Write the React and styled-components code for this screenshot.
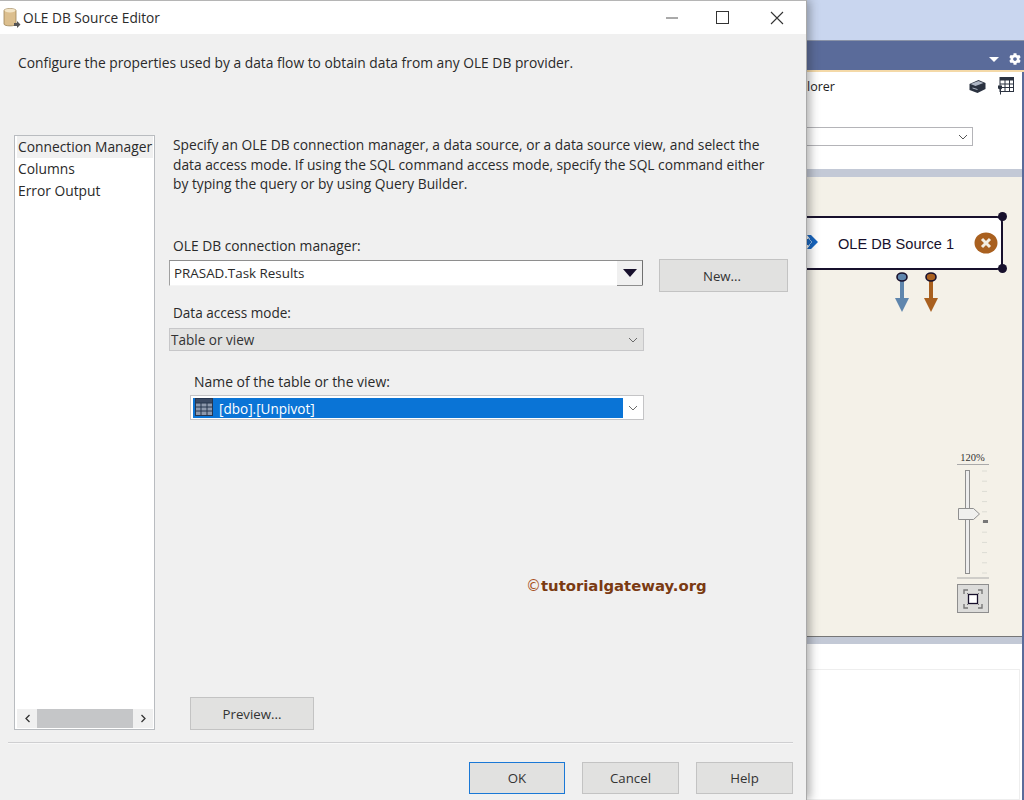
import React from "react";
import styled, { createGlobalStyle } from "styled-components";
import { FaCog } from "react-icons/fa";

const Global = createGlobalStyle`
  html, body { margin: 0; padding: 0; width: 1024px; height: 800px; overflow: hidden; background: #fff; }
  #root { width: 1024px; height: 800px; }
  * { box-sizing: border-box; }
`;
const Page = styled.div`
  display: flex; width: 1024px; height: 800px; overflow: hidden;
  font-family: "Open Sans", "Noto Sans", "Liberation Sans", sans-serif; color: #222;
`;
const Dialog = styled.div`
  width: 807px; flex: none; height: 800px; background: #f0f0f0; display: flex; flex-direction: column;
  border-top: 1px solid #b5b5b5; border-right: 1px solid #a9a9a9;
  box-shadow: 3px 0 9px rgba(40,40,40,.38); position: relative; z-index: 2;
`;
const TitleBar = styled.div`
  height: 33px; flex: none; background: #fff; display: flex; align-items: center; padding-left: 2px;
`;
const TitleText = styled.span` font-size: 13.7px; margin-left: 1px; color: #2a2a2a; flex: 1; `;
const WinButton = styled.span` width: ${p => p.$w || 54}px; display: flex; justify-content: center; margin-right: ${p => p.$mr || 0}px; `;
const Body = styled.div` flex: 1; display: flex; flex-direction: column; `;
const Description = styled.div`
  margin: 19px 0 62px 18px; font-size: 13.8px; line-height: 20px; height: 20px; color: #2a2a2a; white-space: nowrap;
`;
const Content = styled.div` display: flex; height: 595px; margin-left: 14px; `;
const SideList = styled.div`
  width: 141px; flex: none; background: #fff; border: 1px solid #b9bcc0; display: flex; flex-direction: column; padding: 0 1px 1px 2px;
`;
const SideItem = styled.div`
  font-size: 13.8px; line-height: 22px; height: 22px; padding-left: 1px; white-space: nowrap; overflow: hidden;
  background: ${p => (p.$active ? "#f0f0f0" : "transparent")}; color: #2a2a2a;
`;
const SideSpacer = styled.div` flex: 1; `;
const HScroll = styled.div` height: 19px; background: #f0f0f0; display: flex; align-items: center; `;
const ScrollArrow = styled.span` width: 20px; display: flex; justify-content: center; `;
const ScrollThumb = styled.div` width: 96px; height: 19px; background: #c5c6c8; `;
const ScrollTrack = styled.div` flex: 1; `;
const Main = styled.div` margin-left: 14px; width: 624px; display: flex; flex-direction: column; `;
const Paragraph = styled.p`
  margin: 0 0 0 4px; font-size: 13.77px; line-height: 19.5px; color: #2a2a2a; width: 606px; height: 58.5px;
`;
const Label = styled.label`
  display: block; height: 20px; line-height: 20px; font-size: ${p => p.$size}px; color: #2a2a2a;
  margin: ${p => p.$mt}px 0 0 ${p => p.$ml}px; white-space: nowrap;
`;
const ConnRow = styled.div` display: flex; margin-top: 3px; `;
const ConnCombo = styled.div`
  margin-top: 1px; width: 474px; height: 26px; background: #fff; display: flex; font-size: 13.4px;
  border-top: 1px solid #8e8e8e; border-left: 1px solid #a0a0a0; border-right: 1px solid #707070; border-bottom: 1px solid #f5f5f5;
`;
const ComboText = styled.span` flex: 1; padding-left: 4px; line-height: 25px; color: #2a2a2a; `;
const ConnArrow = styled.span`
  width: 25px; background: #f0f0f0; display: flex; align-items: center; justify-content: center;
  border-bottom: 1px solid #8e8e8e; margin-bottom: -1px;
`;
const Btn = styled.div`
  width: ${p => p.$w}px; height: ${p => p.$h}px; flex: none; background: #e1e1e0; border: 1px solid ${p => (p.$primary ? "#1a78d6" : "#c3c3c3")};
  display: flex; align-items: center; justify-content: center; font-size: 13.25px; color: #333;
`;
const NewBtn = styled(Btn)` margin-left: 16px; padding-right: 3px; `;
const ModeCombo = styled.div`
  margin-top: 5px; width: 475px; height: 24px; background: #e2e2e1; border: 1px solid #c7c7c9;
  display: flex; align-items: center; justify-content: space-between; padding: 0 5px 0 1px; font-size: 13.55px; color: #333;
`;
const TableCombo = styled.div`
  margin: 3px 0 0 21px; width: 454px; height: 25px; background: #fff; border: 1px solid #c4c4c6; padding: 2px 0 1px 2px;
  display: flex; align-items: stretch;
`;
const Selected = styled.div`
  width: 430px; background: #0a74d6; color: #fff; font-size: 13.55px; display: flex; align-items: center; gap: 6px; padding-left: 2px;
`;
const SelectedText = styled.span` padding-top: 1px; `;
const IconLift = styled.span` display: flex; margin-top: -3px; `;
const Chevron = styled.span` flex: 1; display: flex; align-items: center; justify-content: center; `;
const Watermark = styled.div`
  margin: 156px 0 0 357px; height: 20px; line-height: 20px; white-space: nowrap;
  font-family: "DejaVu Sans", Verdana, sans-serif; font-weight: 700; font-size: 14.85px; color: #7a3a12;
`;
const Copy = styled.span` color: #a8531f; font-weight: 400; font-size: 15px; `;
const PreviewBtn = styled(Btn)` margin: 101px 0 0 21px; `;
const Separator = styled.div` height: 2px; margin: 12px 13px 0 8px; background: #cfcfd1; border-bottom: 1px solid #f8f8f8; `;
const Footer = styled.div` display: flex; margin: 18px 0 0 469px; gap: 17px; `;

const Back = styled.div` flex: 1; display: flex; flex-direction: column; min-width: 0; border-right: 2px solid #5a6b9a; position: relative; `;
const TopBand = styled.div` height: 41px; flex: none; background: #c9d6ef; border-bottom: 1px solid #8a93a8; margin-right: -2px; `;
const Header = styled.div`
  height: 31px; flex: none; background: #5a6b9a; display: flex; align-items: flex-end; justify-content: flex-end;
  gap: 10px; padding: 0 3px 5px 0; border-bottom: 2px solid #f4d9a8; margin-right: -2px;
`;
const Caret = styled.span`
  width: 0; height: 0; border-left: 5px solid transparent; border-right: 5px solid transparent; border-top: 5px solid #fff; margin-bottom: 3px;
`;
const Toolbar = styled.div` height: 97px; flex: none; background: #fff; display: flex; flex-direction: column; `;
const ToolTop = styled.div` display: flex; align-items: center; height: 28px; padding: 0 8px 0 0; `;
const ToolText = styled.span` font-size: 12.5px; color: #222; flex: 1; `;
const ToolIcons = styled.span` display: flex; gap: 10px; align-items: center; `;
const ToolCombo = styled.div`
  margin-top: 27px; width: 166px; height: 19px; border: 1px solid #b4b4b8; border-left: 0; background: #fff; display: flex; align-items: center; justify-content: flex-end; padding-right: 4px;
`;
const Strip = styled.div` height: ${p => p.$h}px; flex: none; background: #c3c9d6; border-top: ${p => (p.$line ? "1px solid #777" : "0")}; `;
const Canvas = styled.div` height: 459px; flex: none; background: #f4f1e8; position: relative; `;
const Node = styled.div`
  position: absolute; left: -4px; top: 39px; width: 200px; height: 54px; background: #fff; border: 2.5px solid #17102c; border-radius: 0 6px 6px 0;
  display: flex; align-items: center; font-family: "Liberation Sans", Arial, sans-serif; font-size: 14.6px; color: #17102c;
`;
const NodeText = styled.span` margin-left: 33px; flex: 1; padding-top: 1px; `;
const Handle = styled.span`
  position: absolute; right: -6px; width: 9px; height: 9px; border-radius: 50%; background: #17102c; top: ${p => p.$top}px;
`;
const Port = styled.svg` position: absolute; top: 94px; left: ${p => p.$left}px; `;
const InArrow = styled.svg` position: absolute; left: -1px; top: 57px; `;
const NodeX = styled.svg` flex: none; margin-right: 3px; `;
const Zoom = styled.div`
  position: absolute; left: 149px; top: 274px; width: 33px; display: flex; flex-direction: column; align-items: center;
`;
const ZoomLabel = styled.div`
  width: 32px; height: 14px; font-family: "Liberation Serif", serif; font-size: 10.5px; line-height: 14px; text-align: center; color: #333; border-bottom: 1px solid #aaa;
`;
const ZoomScale = styled.svg` display: block; margin-bottom: 5px; `;
const ZoomFit = styled.div`
  width: 32px; height: 29px; background: #dcdcda; border: 1px solid #8e8e8e; display: flex; align-items: center; justify-content: center;
`;
const Bottom = styled.div` flex: 1; background: #fff; padding: 25px 2px 0 0; `;
const BottomInner = styled.div` height: 100%; border: 1px solid #eee; border-left: 0; `;

const Chev = ({ color = "#6b6b6b" }) => (
  <svg width="10" height="6" viewBox="0 0 10 6"><path d="M1 1l4 4 4-4" fill="none" stroke={color} strokeWidth="1" /></svg>
);
const GridIcon = () => (
  <svg width="18" height="18" viewBox="0 0 18 18">
    <rect x=".5" y=".5" width="17" height="17" fill="#8d99ad" stroke="#26364f" />
    <rect x="1" y="1" width="16" height="4" fill="#3b4a63" />
    {[5, 9, 13].map(y => <line key={y} x1="1" x2="17" y1={y} y2={y} stroke="#26364f" />)}
    {[6, 12].map(x => <line key={x} y1="5" y2="17" x1={x} x2={x} stroke="#26364f" />)}
  </svg>
);

export default function App() {
  return (
    <Page>
      <Global />
      <Dialog>
        <TitleBar>
          <svg width="20" height="22" viewBox="0 0 20 22">
            <path d="M2 3.5C2 1 14 1 14 3.5V17C14 19.5 2 19.5 2 17Z" fill="#dcbf8e" stroke="#9c8457" strokeWidth=".8" />
            <ellipse cx="8" cy="3.6" rx="5.4" ry="1.8" fill="#f3e5c7" />
            <path d="M12 16h3v-2l3.5 3.5L15 21v-2h-3z" fill="#555" />
          </svg>
          <TitleText>OLE DB Source Editor</TitleText>
          <WinButton $w={46}>
            <svg width="12" height="2" viewBox="0 0 12 2"><line x1="0" x2="12" y1="1" y2="1" stroke="#555" strokeWidth="1" /></svg>
          </WinButton>
          <WinButton $mr={1}>
            <svg width="13" height="13" viewBox="0 0 13 13"><rect x=".5" y=".5" width="12" height="12" fill="none" stroke="#333" /></svg>
          </WinButton>
          <WinButton $mr={2}>
            <svg width="14" height="14" viewBox="0 0 14 14"><path d="M1 1l12 12M13 1L1 13" stroke="#333" strokeWidth="1.1" /></svg>
          </WinButton>
        </TitleBar>
        <Body>
          <Description>Configure the properties used by a data flow to obtain data from any OLE DB provider.</Description>
          <Content>
            <SideList>
              <SideItem $active>Connection Manager</SideItem>
              <SideItem>Columns</SideItem>
              <SideItem>Error Output</SideItem>
              <SideSpacer />
              <HScroll>
                <ScrollArrow>
                  <svg width="7" height="9" viewBox="0 0 7 9"><path d="M5.5 1L2 4.5 5.5 8" fill="none" stroke="#333" strokeWidth="1.3" /></svg>
                </ScrollArrow>
                <ScrollThumb />
                <ScrollTrack />
                <ScrollArrow>
                  <svg width="7" height="9" viewBox="0 0 7 9"><path d="M1.5 1L5 4.5 1.5 8" fill="none" stroke="#333" strokeWidth="1.3" /></svg>
                </ScrollArrow>
              </HScroll>
            </SideList>
            <Main>
              <Paragraph>
                Specify an OLE DB connection manager, a data source, or a data source view, and select the data access mode. If using the SQL command access mode, specify the SQL command either by typing the query or by using Query Builder.
              </Paragraph>
              <Label $mt={42.5} $ml={4} $size={13.8}>OLE DB connection manager:</Label>
              <ConnRow>
                <ConnCombo>
                  <ComboText>PRASAD.Task Results</ComboText>
                  <ConnArrow>
                    <svg width="14" height="8" viewBox="0 0 14 8"><path d="M0 0h14L7 8z" fill="#17102c" /></svg>
                  </ConnArrow>
                </ConnCombo>
                <NewBtn $w={129} $h={33}>New...</NewBtn>
              </ConnRow>
              <Label $mt={11} $ml={4} $size={13.55}>Data access mode:</Label>
              <ModeCombo>Table or view<Chev /></ModeCombo>
              <Label $mt={21} $ml={25} $size={13.95}>Name of the table or the view:</Label>
              <TableCombo>
                <Selected>
                  <IconLift><GridIcon /></IconLift>
                  <SelectedText>[dbo].[Unpivot]</SelectedText>
                </Selected>
                <Chevron><Chev /></Chevron>
              </TableCombo>
              <Watermark><Copy>©</Copy>tutorialgateway.org</Watermark>
              <PreviewBtn $w={124} $h={33}>Preview...</PreviewBtn>
            </Main>
          </Content>
          <Separator />
          <Footer>
            <Btn $w={96} $h={32} $primary>OK</Btn>
            <Btn $w={97} $h={32}>Cancel</Btn>
            <Btn $w={97} $h={32}>Help</Btn>
          </Footer>
        </Body>
      </Dialog>
      <Back>
        <TopBand />
        <Header>
          <Caret />
          <FaCog size={12} color="#fff" />
        </Header>
        <Toolbar>
          <ToolTop>
            <ToolText>lorer</ToolText>
            <ToolIcons>
              <svg width="19" height="15" viewBox="0 0 18 15">
                <path d="M1 5l9-4 7 3v6l-8 4-8-3z" fill="#2b3240" />
                <path d="M2 5l8-3 5 2-8 3z" fill="#aeb6c4" />
                <path d="M4 9l5 1.5" stroke="#aeb6c4" strokeWidth="1" />
              </svg>
              <svg width="17" height="18" viewBox="0 0 17 18">
                <rect x="3" y=".5" width="13.5" height="14" fill="#fff" stroke="#2b3240" />
                <rect x="3" y=".5" width="13.5" height="3" fill="#2b3240" />
                <path d="M3 7h14M3 10.5h14M8 3v11.5M12.5 3v11.5" stroke="#2b3240" />
                <path d="M1 8.5h4v3l-1 1v5H3v-5l-2-1z" fill="#2b3240" />
              </svg>
            </ToolIcons>
          </ToolTop>
          <ToolCombo><Chev color="#555" /></ToolCombo>
        </Toolbar>
        <Strip $h={8} />
        <Canvas>
          <Node>
            <NodeText>OLE DB Source 1</NodeText>
            <NodeX width="24" height="22" viewBox="0 0 24 22">
              <ellipse cx="12" cy="11" rx="11.5" ry="10.5" fill="#a9601f" />
              <path d="M8 7l8 8M16 7l-8 8" stroke="#f3ede2" strokeWidth="3" />
            </NodeX>
            <Handle $top={-6} />
            <Handle $top={46} />
          </Node>
          <InArrow width="14" height="16" viewBox="0 0 14 16">
            <path d="M0 5h4L1 1h4l7 7-7 7H1l3-4H0z" fill="#1464c0" />
            <path d="M2 4l4 4-4 4" fill="none" stroke="#8db8e8" />
          </InArrow>
          <Port $left={88} width="14" height="42" viewBox="0 0 14 42">
            <rect x="5" y="8" width="4" height="22" fill="#5f86ad" />
            <path d="M0 27h14l-7 14z" fill="#5f86ad" />
            <ellipse cx="7" cy="6" rx="5" ry="4" fill="#5f86ad" stroke="#17102c" strokeWidth="1.6" />
          </Port>
          <Port $left={117} width="14" height="42" viewBox="0 0 14 42">
            <rect x="5" y="8" width="4" height="22" fill="#a9601f" />
            <path d="M0 27h14l-7 14z" fill="#a9601f" />
            <ellipse cx="7" cy="6" rx="5" ry="4" fill="#a9601f" stroke="#17102c" strokeWidth="1.6" />
          </Port>
          <Zoom>
            <ZoomLabel>120%</ZoomLabel>
            <ZoomScale width="32" height="114" viewBox="0 0 32 114">
              <rect x="8.5" y="5.5" width="4" height="103" fill="#eee" stroke="#8f8f8f" />
              {Array.from({ length: 11 }).map((_, i) => (
                <line key={i} x1="25" x2="30" y1={6 + i * 10.2} y2={6 + i * 10.2} stroke="#dcdcd4" />
              ))}
              <rect x="26" y="55" width="5" height="3" fill="#777" />
              <path d="M1.5 43.5h15l6 5.5-6 5.5h-15z" fill="#f0f0ee" stroke="#8f8f8f" />
              <line x1="0" x2="32" y1="113" y2="113" stroke="#aaa" />
            </ZoomScale>
            <ZoomFit>
              <svg width="20" height="20" viewBox="0 0 20 20">
                <path d="M1 5V1h4M15 1h4v4M1 15v4h4M19 15v4h-4" fill="none" stroke="#777" strokeWidth="1.4" />
                <path d="M4 4l2 2M16 4l-2 2M4 16l2-2M16 16l-2-2" stroke="#777" />
                <rect x="5.5" y="5.5" width="9" height="9" fill="#fff" stroke="#17102c" strokeWidth="1.3" />
              </svg>
            </ZoomFit>
          </Zoom>
        </Canvas>
        <Strip $h={8} $line />
        <Bottom><BottomInner /></Bottom>
      </Back>
    </Page>
  );
}
